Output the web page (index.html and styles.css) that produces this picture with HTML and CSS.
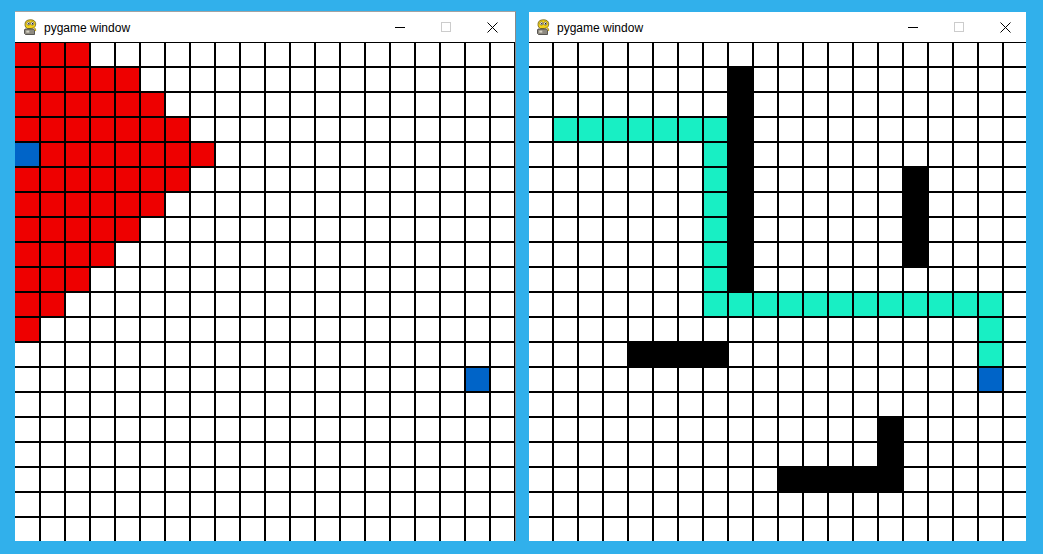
FILE: index.html
```html
<!DOCTYPE html>
<html lang="en">
<head>
<meta charset="utf-8">
<title>pygame windows</title>
<link rel="stylesheet" href="styles.css">
</head>
<body>
<div class="desktop">
  <section class="window window-left">
    <header class="titlebar">
      <svg class="title-icon" width="13" height="17" viewBox="0 0 13 17">
        <path d="M3 1.5 C5 0.5 9 0.5 10.5 2 C12 3.5 12 6 11 7.5 C10 9 8 9.5 6 9.5 L3.5 9.5 C2 9 1 7.5 1 5.5 C1 3.5 1.8 2.2 3 1.5 Z" fill="#f3d21a" stroke="#6b5a10" stroke-width="0.8"/>
        <circle cx="4.5" cy="4.5" r="1.6" fill="#fff" stroke="#333" stroke-width="0.5"/>
        <circle cx="8.3" cy="4.5" r="1.6" fill="#fff" stroke="#333" stroke-width="0.5"/>
        <circle cx="4.8" cy="4.7" r="0.7" fill="#000"/>
        <circle cx="8.6" cy="4.7" r="0.7" fill="#000"/>
        <path d="M1 10 L9.5 10 L10.5 11 L10.5 15.5 L1.5 15.5 L0.5 14.5 L0.5 11 Z" fill="#8e8a80" stroke="#3c3a36" stroke-width="0.8"/>
        <rect x="2.3" y="11.6" width="3" height="2" fill="#d8d4c6"/>
        <path d="M9 8 C11 9 12 10 11.5 12" fill="none" stroke="#c9a816" stroke-width="1.2"/>
      </svg>
      <span class="title-text">pygame window</span>
      <div class="controls">
        <span class="ctl"><span class="ctl-min"></span></span>
        <span class="ctl"><span class="ctl-max"></span></span>
        <span class="ctl">
          <svg class="ctl-close" width="11" height="11" viewBox="0 0 11 11"><path d="M0.5 0.5 L10.5 10.5 M10.5 0.5 L0.5 10.5" stroke="#000" stroke-width="1"/></svg>
        </span>
      </div>
    </header>
    <div class="client">
      <div class="grid" id="grid-left"></div>
    </div>
  </section>

  <section class="window window-right">
    <header class="titlebar">
      <svg class="title-icon" width="13" height="17" viewBox="0 0 13 17">
        <path d="M3 1.5 C5 0.5 9 0.5 10.5 2 C12 3.5 12 6 11 7.5 C10 9 8 9.5 6 9.5 L3.5 9.5 C2 9 1 7.5 1 5.5 C1 3.5 1.8 2.2 3 1.5 Z" fill="#f3d21a" stroke="#6b5a10" stroke-width="0.8"/>
        <circle cx="4.5" cy="4.5" r="1.6" fill="#fff" stroke="#333" stroke-width="0.5"/>
        <circle cx="8.3" cy="4.5" r="1.6" fill="#fff" stroke="#333" stroke-width="0.5"/>
        <circle cx="4.8" cy="4.7" r="0.7" fill="#000"/>
        <circle cx="8.6" cy="4.7" r="0.7" fill="#000"/>
        <path d="M1 10 L9.5 10 L10.5 11 L10.5 15.5 L1.5 15.5 L0.5 14.5 L0.5 11 Z" fill="#8e8a80" stroke="#3c3a36" stroke-width="0.8"/>
        <rect x="2.3" y="11.6" width="3" height="2" fill="#d8d4c6"/>
        <path d="M9 8 C11 9 12 10 11.5 12" fill="none" stroke="#c9a816" stroke-width="1.2"/>
      </svg>
      <span class="title-text">pygame window</span>
      <div class="controls">
        <span class="ctl"><span class="ctl-min"></span></span>
        <span class="ctl"><span class="ctl-max"></span></span>
        <span class="ctl">
          <svg class="ctl-close" width="11" height="11" viewBox="0 0 11 11"><path d="M0.5 0.5 L10.5 10.5 M10.5 0.5 L0.5 10.5" stroke="#000" stroke-width="1"/></svg>
        </span>
      </div>
    </header>
    <div class="client">
      <div class="grid" id="grid-right"></div>
    </div>
  </section>
</div>
<script src="script.js"></script>
</body>
</html>
```

FILE: styles.css
```css
html, body {
  margin: 0;
  padding: 0;
}

body {
  background: #31b0eb;
  height: 554px;
  overflow: hidden;
  font-family: "Liberation Sans", Arial, sans-serif;
}

.desktop {
  display: flex;
  align-items: flex-start;
  gap: 13px;
  padding: 11px 0 0 15px;
}

.window {
  background: #fff;
  display: flex;
  flex-direction: column;
  overflow: hidden;
}

.window-left {
  width: 500px;
  border-top: 1px solid #a3a3a3;
  border-right: 1px solid #8a8a8a;
}

.window-right {
  width: 497px;
  margin-top: 1px;
}

.titlebar {
  height: 30px;
  display: flex;
  align-items: center;
  padding-left: 8px;
  background: #fff;
}

.window-left .titlebar {
  padding-left: 9px;
}

.title-icon {
  display: block;
  flex: none;
  margin-right: 7px;
  margin-top: 1px;
}

.title-text {
  font-size: 12px;
  color: #000;
  line-height: 30px;
  padding-top: 1px;
}

.controls {
  margin-left: auto;
  display: flex;
  height: 30px;
}

.window-right .controls {
  margin-right: -2px;
}

.ctl {
  width: 46px;
  height: 30px;
  display: flex;
  align-items: center;
  justify-content: center;
}

.ctl-min {
  display: block;
  width: 10px;
  height: 1px;
  background: #000;
  margin-top: 1px;
}

.ctl-max {
  display: block;
  width: 10px;
  height: 10px;
  box-sizing: border-box;
  border: 1px solid #cccccc;
}

.ctl-close {
  display: block;
}

.client {
  height: 499px;
  overflow: hidden;
  background: #000;
}

.grid {
  display: grid;
  grid-template-columns: repeat(20, 23px);
  grid-auto-rows: 23px;
  gap: 2px;
  padding-top: 1px;
  background: #000;
}

.window-left .grid {
  grid-template-columns: 24px repeat(19, 23px);
}

.cell {
  background: #fff;
}

.cell.red {
  background: #ee0000;
}

.cell.blue {
  background: #0064c8;
}

.cell.teal {
  background: #18efc4;
}

.cell.wall {
  background: #000;
}
```

FILE: script.js
```js
var maps = {
  "grid-left": [
    "RRR.................",
    "RRRRR...............",
    "RRRRRR..............",
    "RRRRRRR.............",
    "BRRRRRRR............",
    "RRRRRRR.............",
    "RRRRRR..............",
    "RRRRR...............",
    "RRRR................",
    "RRR.................",
    "RR..................",
    "R...................",
    "....................",
    "..................B.",
    "....................",
    "....................",
    "....................",
    "....................",
    "....................",
    "...................."
  ],
  "grid-right": [
    "....................",
    "........K...........",
    "........K...........",
    ".TTTTTTTK...........",
    ".......TK...........",
    ".......TK......K....",
    ".......TK......K....",
    ".......TK......K....",
    ".......TK......K....",
    ".......TK...........",
    ".......TTTTTTTTTTTT.",
    "..................T.",
    "....KKKK..........T.",
    "..................B.",
    "....................",
    "..............K.....",
    "..............K.....",
    "..........KKKKK.....",
    "....................",
    "...................."
  ]
};

var kinds = { "R": "red", "B": "blue", "T": "teal", "K": "wall" };

Object.keys(maps).forEach(function (id) {
  var grid = document.getElementById(id);
  maps[id].forEach(function (row) {
    for (var i = 0; i < row.length; i++) {
      var cell = document.createElement("div");
      cell.className = "cell" + (kinds[row[i]] ? " " + kinds[row[i]] : "");
      grid.appendChild(cell);
    }
  });
});
```
